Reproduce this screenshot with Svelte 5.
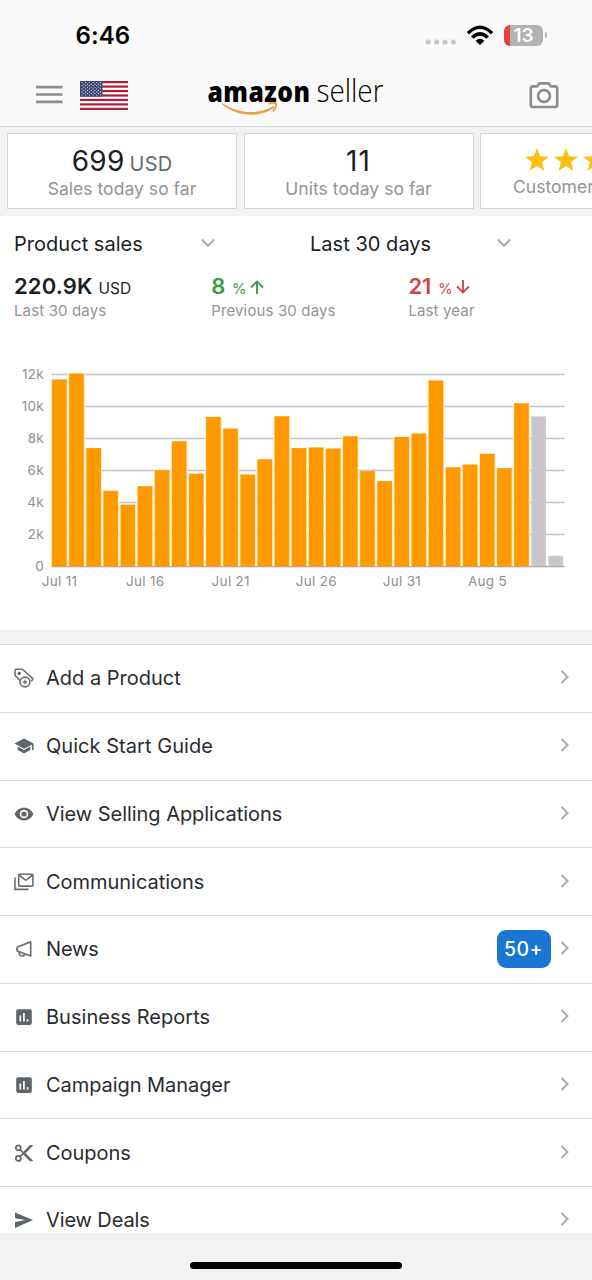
<script>
  const bars = [
    11.69, 12.06, 7.4, 4.73, 3.86, 5.02, 6.02, 7.83, 5.8, 9.35, 8.62, 5.75, 6.7, 9.39, 7.4,
    7.44, 7.37, 8.14, 5.96, 5.34, 8.1, 8.31, 11.63, 6.2, 6.37, 7.04, 6.15, 10.2, 9.38, 0.67
  ];
  const ticks = [12, 10, 8, 6, 4, 2, 0];
  const days = ['Jul 11', 'Jul 16', 'Jul 21', 'Jul 26', 'Jul 31', 'Aug 5'];
  const pitch = 17.115;
  const y = (v) => 206.5 - v * 16;

  const items = [
    { icon: 'tag', label: 'Add a Product', ls: 0 },
    { icon: 'cap', label: 'Quick Start Guide', ls: 0.04 },
    { icon: 'eye', label: 'View Selling Applications', ls: -0.04 },
    { icon: 'mail', label: 'Communications', ls: -0.03 },
    { icon: 'horn', label: 'News', ls: -0.15, badge: '50+' },
    { icon: 'chart', label: 'Business Reports', ls: 0.02 },
    { icon: 'chart', label: 'Campaign Manager', ls: -0.06 },
    { icon: 'scissors', label: 'Coupons', ls: -0.04 },
    { icon: 'send', label: 'View Deals', ls: -0.12 }
  ];
  const star = 'M12 0l3.1 8.3 8.9.4-7 5.5 2.4 8.6L12 17.900l-7.400 4.900L7 14.200 0 8.700l8.900-.4z';
</script>

<div class="screen">
  <div class="status">
    <span class="time">6:46</span>
    <div class="signals">
      <svg class="dots" width="32" height="6" viewBox="0 0 32 6" fill="#c6c6c8">
        {#each [0, 1, 2, 3] as i}<circle cx={3.2 + i * 8.4} cy="3" r="2.6" />{/each}
      </svg>
      <svg class="wifi" width="28" height="21" viewBox="0 0 28 21">
        <g fill="none" stroke="#000" stroke-width="3.4">
          <path d="M1.900 8.200Q14-3.800 26.100 8.200" />
          <path d="M6.300 12.500Q14 5.200 21.700 12.500" />
        </g>
        <path d="M9.600 15.700Q14 12 18.400 15.700L14 20z" />
      </svg>
      <div class="battery"><span>13</span></div>
      <i class="nub"></i>
    </div>
  </div>

  <header>
    <svg class="menu" width="27" height="19" viewBox="0 0 27 19" stroke="#8b8d91" stroke-width="2.700">
      <path d="M0 2.200H26.500M0 9.500H26.500M0 16.800H26.500" />
    </svg>
    <svg class="flag" width="48" height="29" viewBox="0 0 48 29">
      <rect width="48" height="29" fill="#fff" />
      {#each [0, 1, 2, 3, 4, 5, 6] as i}<rect y={i * 4.46} width="48" height="2.230" fill="#b01f38" />{/each}
      <rect width="22.500" height="15.600" fill="#3c4473" />
      {#each [0, 1, 2, 3, 4, 5, 6, 7, 8] as r}
        {#each Array(r % 2 ? 5 : 6) as _, c}
          <circle cx={2 + c * 3.7 + (r % 2 ? 1.85 : 0)} cy={1.6 + r * 1.55} r=".620" fill="#e4e7f2" />
        {/each}
      {/each}
    </svg>
    <svg class="logo" width="178" height="48" viewBox="0 -2 178 48">
      <text transform="translate(.5 26.500) scale(.85 1)" class="amazon">amazon</text>
      <text transform="translate(109.500 26.500) scale(.87 1)" class="seller">seller</text>
      <path d="M15.500 28.200C30 38.500 51 40 65.500 31.500C66.800 31 67.600 32 66.600 32.900C52 43.500 29 41.500 15.200 29.300C14.700 28.600 15 28 15.500 28.200Z" fill="#eda03c" />
      <path d="M61.500 28.900Q65.500 27.100 69 28.400Q69.600 32 66 36.400" fill="none" stroke="#eda03c" stroke-width="2" stroke-linejoin="round" />
    </svg>
    <svg class="camera" width="30" height="28" viewBox="0 0 30 28" fill="none" stroke="#8b8d91" stroke-width="2.700">
      <path d="M4 5.300H8.300L10.500 2.300H19.500L21.700 5.300H26Q28.200 5.300 28.200 7.500V23.800Q28.200 26 26 26H4Q1.800 26 1.800 23.800V7.500Q1.800 5.300 4 5.300Z" stroke-linejoin="round" />
      <circle cx="15" cy="15" r="5.900" />
    </svg>
  </header>

  <section class="tiles">
    <div class="tile">
      <div class="big"><span class="n699">699</span> <small>USD</small></div>
      <div class="cap">Sales today so far</div>
    </div>
    <div class="tile">
      <div class="big eleven">11</div>
      <div class="cap">Units today so far</div>
    </div>
    <div class="tile last">
      <div class="stars">
        {#each [0, 1, 2, 3, 4] as i}<svg width="24" height="23" viewBox="0 0 24 23" fill="#fdbf12"><path d={star} /></svg>{/each}
      </div>
      <div class="cap">Customer feedback</div>
    </div>
  </section>

  <section class="sales">
    <div class="selects">
      {#each ['Product sales', 'Last 30 days'] as s}
        <div class="select">
          <span>{s}</span>
          <svg width="16" height="10" viewBox="0 0 16 10" fill="none" stroke="#aeb0b2" stroke-width="2.300"><path d="M1.800 1.500L8 7.700L14.200 1.500" /></svg>
        </div>
      {/each}
    </div>
    <div class="metrics">
      <div class="metric">
        <div class="val"><b class="total">220.9K</b><span class="usd">USD</span></div>
        <div class="sub">Last 30 days</div>
      </div>
      <div class="metric up">
        <div class="val"><b>8</b><span class="pct">%</span>
          <svg width="14" height="14" viewBox="0 0 14 14" fill="none" stroke="currentColor" stroke-width="1.900"><path d="M7 14V1.500M1 7.500L7 1.500L13 7.500" /></svg>
        </div>
        <div class="sub">Previous 30 days</div>
      </div>
      <div class="metric down">
        <div class="val"><b>21</b><span class="pct">%</span>
          <svg width="14" height="14" viewBox="0 0 14 14" fill="none" stroke="currentColor" stroke-width="1.900"><path d="M7 0V12.500M1 6.500L7 12.500L13 6.500" /></svg>
        </div>
        <div class="sub">Last year</div>
      </div>
    </div>
    <svg class="plot" width="592" height="240" viewBox="0 0 592 240">
      {#each ticks as t}
        <path d="M51.500 {y(t)}H564.500" stroke="#c3c3c7" stroke-width="1.300" />
        <text x="44" y={y(t) + 4} text-anchor="end">{t ? t + 'k' : '0'}</text>
      {/each}
      {#each bars as b, i}
        {#if i < 28}<rect x={51 + i * pitch} y={y(b)} width="16.700" height={b * 16} fill="#fff0c4" />{/if}
        <rect x={52.1 + i * pitch} y={y(b)} width="14.600" height={b * 16} fill={i < 28 ? '#ff9900' : '#c8c7cc'} />
      {/each}
      <path d="M51.500 206.700H564.500" stroke="#b7a88f" stroke-width="1" />
      {#each days as d, i}
        <text x={59.6 + i * 5 * pitch} y="225.500" text-anchor="middle">{d}</text>
      {/each}
    </svg>
  </section>

  <nav>
    {#each items as it}
      <div class="row">
        <svg class="ic" width="20" height="20" viewBox="0 0 20 20" fill="#606569">
          {#if it.icon === 'tag'}
            <g fill="none" stroke="#6c7074" stroke-width="1.600">
              <path d="M6.500 13L1.700 8.100Q1 7.300 1 6.500V3Q1 1.300 2.700 1.300H7.500Q8.600 1.300 9.400 2L18.500 10.300Q19.200 11 18.200 12.200L17.200 13.200" stroke-linejoin="round" />
              <circle cx="11" cy="14" r="4.900" /><path d="M11 11.800V16.200M8.800 14H13.200" stroke-width="1.300" />
            </g>
            <circle cx="5.200" cy="5.400" r="1.700" />
          {:else if it.icon === 'cap'}
            <path d="M.5 7.600L10 2.600L19.600 7.600V14H17.900V8.700L10 12.700Z" />
            <path d="M3.700 10.600L10 13.900L16.300 10.600V13.900L10 17.400L3.700 13.900Z" />
          {:else if it.icon === 'eye'}
            <path fill-rule="evenodd" d="M10 3.700C5.700 3.700 2.100 6.300.6 10C2.100 13.700 5.700 16.400 10 16.400S17.900 13.700 19.400 10C17.900 6.300 14.300 3.700 10 3.700ZM10 14.300A4.300 4.300 0 1 1 10 5.700A4.300 4.300 0 0 1 10 14.300ZM10 7.400A2.600 2.600 0 1 0 10 12.600A2.600 2.600 0 0 0 10 7.400Z" />
          {:else if it.icon === 'mail'}
            <g fill="none" stroke="#6c7074" stroke-width="1.600">
              <rect x="4.700" y="2.300" width="14.200" height="11.800" rx=".8" />
              <path d="M5 3L11.800 8.300L18.600 3M1 5.500V17.400H14.500" />
            </g>
          {:else if it.icon === 'horn'}
            <g fill="none" stroke="#6c7074" stroke-width="1.700" stroke-linejoin="round">
              <path d="M3.400 8L16.700 2.900V17L3.400 12.100Q2.300 10 3.400 8Z" />
              <path d="M5 12.800Q5 17 8 17Q10.600 17 10.900 14.900" />
            </g>
          {:else if it.icon === 'chart'}
            <rect x="2.200" y="2.300" width="15.600" height="15.600" rx="1.800" />
            <path d="M6.300 8.500V14.600M9.900 6V14.600M13.600 12.200V14.600" stroke="#fff" stroke-width="1.700" />
          {:else if it.icon === 'scissors'}
            <g fill="none" stroke="#606569" stroke-width="1.700">
              <circle cx="4.300" cy="4.800" r="2.500" /><circle cx="4.300" cy="15.400" r="2.500" />
              <path d="M6 6.600L10 10.500M6 13.600L9.700 10" />
            </g>
            <path d="M9.700 8.400L16 2H18.700V2.900L11.500 10.200ZM8.800 11L10.600 9.200L18.700 17.300V18.200H16Z" />
          {:else}
            <path d="M1 2.400L19 10.100L1 17.900V12L11.500 10.100L1 8.300Z" />
          {/if}
        </svg>
        <span class="label" style:letter-spacing="{it.ls}px">{it.label}</span>
        {#if it.badge}<span class="badge">{it.badge}</span>{/if}
        <svg class="chev" width="10" height="14" viewBox="0 0 10 14" fill="none" stroke="#abadaf" stroke-width="2"><path d="M1.500 1L7.500 7L1.500 13" /></svg>
      </div>
    {/each}
  </nav>
  <footer><i></i></footer>
</div>

<style>
  :global(body) { background: #fff; }
  .screen {
    width: 592px; height: 1280px; overflow: hidden; display: flex; flex-direction: column;
    background: #fff; font-family: Inter, "Liberation Sans", sans-serif; color: #1c1e21;
  }
  .screen * { box-sizing: border-box; }
  svg { display: block; flex: none; }
  .status {
    height: 72px; flex: none; background: #fafafa; display: flex; justify-content: space-between;
    padding: 0 45px 0 75.500px; color: #000;
  }
  .time { font-size: 24px; font-weight: 600; line-height: 72px; letter-spacing: 0.100px; }
  .signals { display: flex; align-items: center; height: 70px; }
  .dots { margin: 13px 9px 0 0; }
  .wifi { margin-right: 10px; }
  .battery {
    width: 39px; height: 21px; border-radius: 6px; background: linear-gradient(90deg, #e8413c 6px, #b3b3b4 6px);
    color: #fff; font-size: 19px; font-weight: 600; line-height: 21px; text-align: center;
  }
  .nub { width: 2px; height: 6px; margin-left: 2px; background: #b3b3b4; border-radius: 0 3px 3px 0; }
  header {
    height: 55px; flex: none; background: #fafafa; border-bottom: 1px solid #d5d7d8;
    display: flex; align-items: flex-start; padding-left: 36px;
  }
  .menu { margin-top: 13px; }
  .flag { margin: 9px 0 0 17px; }
  .logo { margin: 1px 0 0 79px; overflow: visible; }
  .camera { margin: 9px 0 0 144px; }
  .amazon { font: 800 29px "Open Sans", sans-serif; fill: #000; letter-spacing: 0.550px; }
  .seller { font: 300 32px "Open Sans", sans-serif; fill: #000; }
  .tiles {
    height: 89px; flex: none; background: #f2f3f4; display: flex; gap: 6.500px; padding: 6px 0 0 7px; overflow: hidden;
  }
  .tile {
    width: 230px; height: 76px; flex: none; background: #fff; border: 1.500px solid #d4d6d8;
    display: flex; flex-direction: column; align-items: center; padding-top: 11px;
  }
  .big { font-size: 28px; line-height: 32px; letter-spacing: 0.1px; white-space: nowrap; height: 33px; }
  .n699 { letter-spacing: 0.3px; }
  .eleven { letter-spacing: 1.200px; font-feature-settings: "calt" 0, "kern" 0; }
  .big small { font-size: 20px; color: #66696c; letter-spacing: 0.2px; margin-left: -3px; }
  .cap { font-size: 17.500px; line-height: 22px; color: #929496; letter-spacing: 0.040px; white-space: nowrap; }
  .last { align-items: flex-start; padding-left: 32px; }
  .stars { display: flex; gap: 5px; margin: 3px 0 0 12px; height: 28px; }
  .sales { height: 428px; flex: none; border-bottom: 14px solid #f2f2f2; overflow: hidden; }
  .selects { display: flex; padding: 15px 0 0 14px; }
  .select { width: 296px; flex: none; display: flex; font-size: 20px; line-height: 26px; }
  .select span { width: 186px; letter-spacing: 0.030px; }
  .select svg { margin-top: 7px; }
  .metrics { display: flex; padding: 15px 0 0 14px; }
  .metric { width: 197.200px; flex: none; }
  .val { display: flex; align-items: baseline; height: 28px; line-height: 28px; }
  .val b { font-size: 22px; font-weight: 600; }
  .total { letter-spacing: 0.150px; }
  .usd { font-size: 15.500px; margin-left: 6px; }
  .pct { font-size: 15px; margin: 0 3px 0 6.500px; }
  .up .val { color: #419a46; }
  .down .val { color: #cf4744; }
  .sub { font-size: 15px; line-height: 22px; color: #929496; letter-spacing: 0.140px; }
  .plot { margin-top: 38px; }
  .plot text { font-size: 13.500px; fill: #8e9092; letter-spacing: 0.3px; }
  nav { height: 589px; flex: none; overflow: hidden; }
  .row {
    height: 67.750px; border-top: 1.500px solid #d9dadb; display: flex; align-items: center; padding: 0 22px 0 14px;
  }
  .ic { margin-right: 12px; }
  .label { flex: 1; font-size: 20px; line-height: 26px; color: #2a2c2f; }
  .badge {
    width: 54px; height: 38px; border-radius: 9px; background: #1976d2; color: #fff; font-size: 19.500px; font-weight: 500;
    line-height: 39px; text-align: center; margin-right: 9.500px; letter-spacing: 0.4px;
  }
  .chev { margin-bottom: 2px; }
  footer { height: 47px; flex: none; background: #f1f2f3; display: flex; justify-content: center; padding-top: 29px; }
  footer i { width: 212px; height: 7px; border-radius: 4px; background: #000; }
</style>
